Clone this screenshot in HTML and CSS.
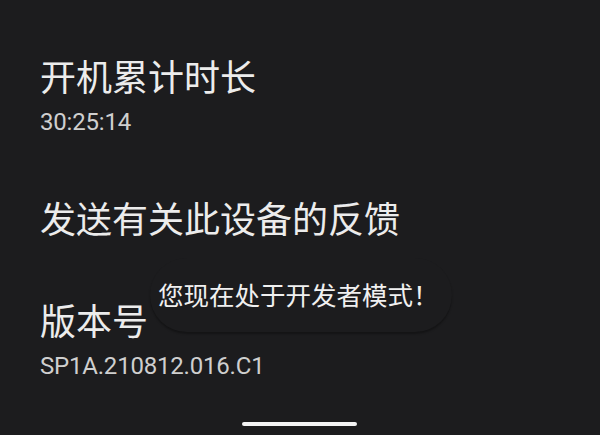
FILE: index.html
```html
<!DOCTYPE html>
<html lang="zh-CN">
<head>
<meta charset="utf-8">
<link rel="stylesheet" href="styles.css">
</head>
<body>
<div class="screen">
  <div class="list">
    <div class="item">
      <div class="title">开机累计时长</div>
      <div class="summary">30:25:14</div>
    </div>
    <div class="item">
      <div class="title">发送有关此设备的反馈</div>
    </div>
    <div class="item">
      <div class="title">版本号</div>
      <div class="summary">SP1A.210812.016.C1</div>
    </div>
  </div>
  <div class="toast"><span class="toast-text">您现在处于开发者模式！</span></div>
  <div class="home-bar"></div>
</div>
</body>
</html>
```
FILE: styles.css
```css
html, body {
  margin: 0;
  padding: 0;
  background: #1c1c1e;
}
.screen {
  position: relative;
  width: 600px;
  height: 435px;
  overflow: hidden;
  background: #1c1c1e;
  font-family: Roboto, "Noto Sans CJK SC", sans-serif;
}
.list {
  padding: 23px 0 0 40px;
}
.item {
  padding: 30px 0 28px;
}
.title {
  font-size: 36px;
  line-height: 44px;
  color: #ececec;
  font-family: "Noto Sans CJK SC", sans-serif;
}
.summary {
  margin-top: 10px;
  font-size: 24px;
  line-height: 30px;
  letter-spacing: -0.2px;
  color: #cfcfcf;
}
.toast {
  position: absolute;
  left: 150px;
  top: 258px;
  width: 302px;
  height: 74px;
  box-sizing: border-box;
  padding: 0 0 2px 8px;
  display: flex;
  align-items: center;
  border-radius: 37px;
  background: #1c1c1e;
  box-shadow: 0 2px 2px rgba(0, 0, 0, 0.3);
}
.toast-text {
  font-family: "Noto Sans CJK SC", sans-serif;
  font-size: 25.5px;
  line-height: 30px;
  color: #f0f0f0;
}
.home-bar {
  position: absolute;
  left: 242px;
  top: 422px;
  width: 115px;
  height: 4px;
  border-radius: 2px;
  background: #f4f4f4;
}
```
